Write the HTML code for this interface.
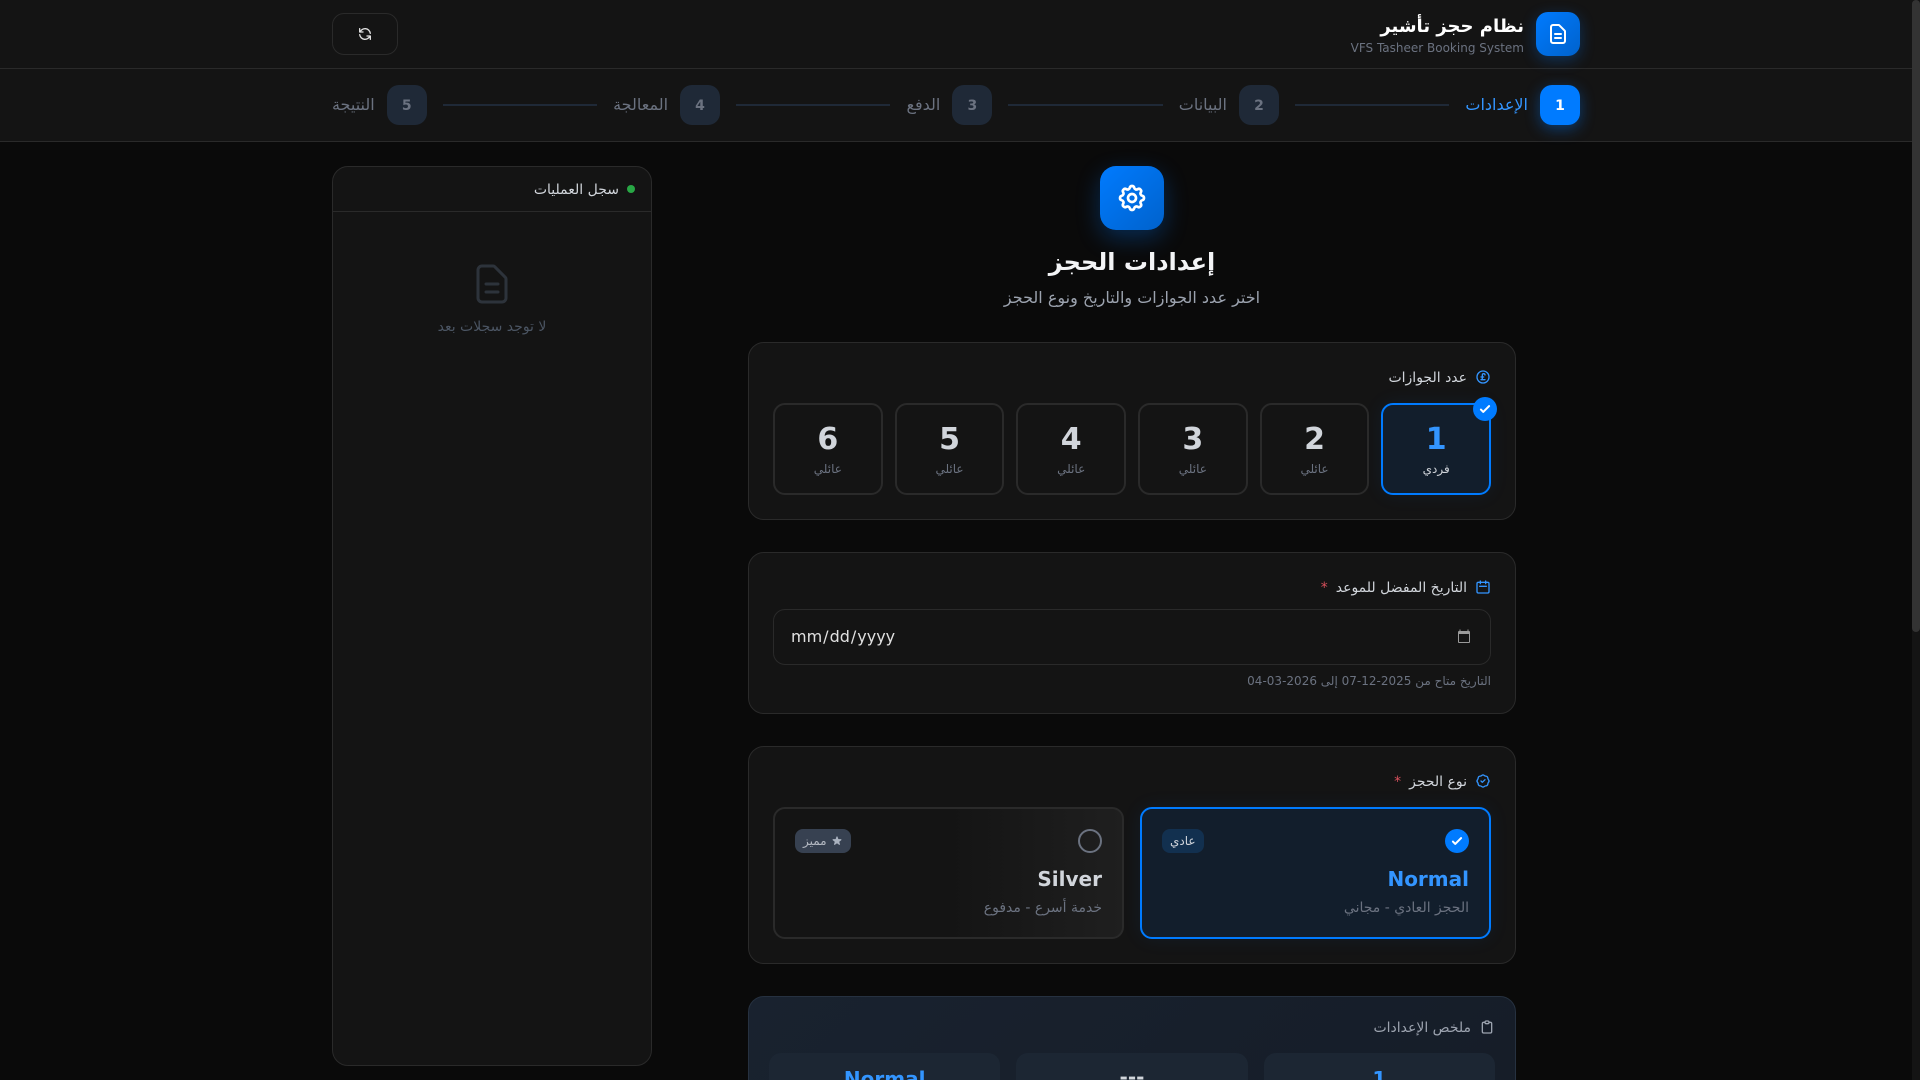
<!DOCTYPE html>
<html lang="ar" dir="rtl">
<head>
<meta charset="utf-8">
<title>نظام حجز تأشير</title>
<style>
*{box-sizing:border-box;margin:0;padding:0}
html,body{width:1920px;height:1080px;overflow:hidden;background:#0a0a0a}
body{font-family:"DejaVu Sans","Liberation Sans","Noto Sans CJK SC",sans-serif;color:#e0e0e0;position:relative;font-size:14px;line-height:20px}
svg{display:block;flex:none}
.sb-track{position:absolute;left:1912px;top:0;width:8px;height:1080px;background:#141414}
.sb-thumb{position:absolute;left:1912px;top:0;width:8px;height:632px;background:#333;border-radius:4px}
.head{position:absolute;left:0;top:0;width:1912px;height:69px;background:#141414;border-bottom:1px solid #2a2a2a}
.stepbar{position:absolute;left:0;top:69px;width:1912px;height:73px;background:#141414;border-bottom:1px solid #2a2a2a}
.logo{position:absolute;left:1536px;top:12px;width:44px;height:44px;border-radius:12px;background:linear-gradient(135deg,#007bff,#0062cc);box-shadow:0 4px 15px rgba(0,123,255,.3);display:flex;align-items:center;justify-content:center}
.brand{position:absolute;right:396px;top:12px;text-align:right}
.brand h1{font-size:18px;line-height:28px;font-weight:700;color:#fff;position:relative;top:1px}
.brand p{font-size:12px;line-height:16px;color:#6b7280}
.refresh{position:absolute;left:332px;top:13px;width:66px;height:42px;border:1px solid #2a2a2a;border-radius:12px;display:flex;align-items:center;justify-content:center}
.steps{position:absolute;left:332px;top:16px;width:1248px;height:40px;display:flex;align-items:center}
.step{display:flex;align-items:center;gap:12px;flex:none}
.num{width:40px;height:40px;border-radius:12px;background:#1f2937;color:#6b7280;font-weight:700;font-size:14px;display:flex;align-items:center;justify-content:center;padding-top:1px}
.step span{color:#6b7280;font-size:16px;line-height:24px}
.step.on .num{background:#007bff;color:#fff;box-shadow:0 4px 15px rgba(0,123,255,.4)}
.step.on span{color:#3395ff}
.line{flex:1;height:2px;background:#1f2937;margin:0 16px}
.log{position:absolute;left:332px;top:166px;width:320px;height:900px;background:#141414;border:1px solid #2a2a2a;border-radius:16px}
.log-h{height:45px;border-bottom:1px solid #2a2a2a;display:flex;align-items:center;gap:8px;padding:0 16px;color:#d1d5db}
.log-h div+div{position:relative;top:1px}
.dot{width:8px;height:8px;border-radius:50%;background:#28a745}
.log-e{position:absolute;left:0;right:0;top:93px;display:flex;flex-direction:column;align-items:center}
.log-e p{font-size:14px;line-height:20px;color:#4b5563;margin-top:9px}
.gear{position:absolute;left:1100px;top:166px;width:64px;height:64px;border-radius:16px;background:linear-gradient(135deg,#007bff,#0062cc);box-shadow:0 8px 24px rgba(0,123,255,.3);display:flex;align-items:center;justify-content:center}
.ttl{position:absolute;left:748px;width:768px;text-align:center}
.t1{top:246px;font-size:24px;line-height:32px;font-weight:700;color:#f3f4f6}
.t2{top:286px;font-size:16px;line-height:24px;color:#9ca3af}
.card{position:absolute;left:748px;width:768px;background:#141414;border:1px solid #2a2a2a;border-radius:16px;padding:24px}
.lab{display:flex;align-items:center;gap:8px;height:20px;color:#d1d5db}
.lab span{position:relative;top:1px}
.req{color:#d9505c}
.count{display:grid;grid-template-columns:repeat(6,1fr);gap:12px;margin-top:16px}
.ci{position:relative;height:92px;border:2px solid #2a2a2a;border-radius:12px;padding:16px;text-align:center}
.ci b{display:block;font-size:30px;line-height:36px;color:#d1d5db;margin-bottom:4px;position:relative;top:1px}
.ci i{display:block;font-style:normal;font-size:12px;line-height:16px;color:#6b7280}
.ci.on{border-color:#007bff;background:#121e2c;box-shadow:0 0 20px rgba(0,123,255,.08)}
.ci.on b{color:#3395ff}
.ci.on i{color:#d1d5db}
.chk{position:absolute;top:-8px;right:-8px;width:24px;height:24px;border-radius:50%;background:#007bff;display:flex;align-items:center;justify-content:center}
.dateb{height:56px;margin-top:12px;border:1px solid #2a2a2a;border-radius:12px;position:relative}
.dtxt{position:absolute;left:16px;top:15px;direction:ltr;font-size:16px;line-height:24px;color:#e0e0e0;white-space:nowrap;unicode-bidi:isolate}
.dtxt span{padding:0 1px}
.hint{margin-top:8px;font-size:12px;line-height:16px;color:#6b7280}
.types{display:grid;grid-template-columns:1fr 1fr;gap:16px;margin-top:16px}
.ti{height:132px;border:2px solid #2a2a2a;border-radius:12px;padding:20px;background:linear-gradient(to right,#141414 50%,#1f1f1f)}
.ti.on{border-color:#007bff;background:#121e2c;box-shadow:0 0 20px rgba(0,123,255,.08)}
.row{display:flex;justify-content:space-between;align-items:center;height:24px;margin-bottom:12px}
.rad{width:24px;height:24px;border-radius:50%;border:2px solid #6b7280}
.rad.on{border:0;background:#007bff;display:flex;align-items:center;justify-content:center}
.bdg{height:24px;padding:0 8px;border-radius:8px;font-size:12px;display:flex;align-items:center;gap:4px;line-height:16px}
.bdg.n{background:#12304f;color:#d1d5db}
.bdg.s{background:#374151;color:#b5bac3}
.ti h3{font-size:20px;line-height:28px;font-weight:700;color:#d1d5db;margin-bottom:4px}
.ti.on h3{color:#3395ff}
.ti p{font-size:14px;line-height:20px;color:#6b7280;position:relative;top:1px}
.sum{top:996px;height:220px;padding:20px;border-color:#263140;background:linear-gradient(135deg,#19222f,#151c27)}
.sum .lab{color:#9ca3af}
.sgrid{display:grid;grid-template-columns:repeat(3,1fr);gap:16px;margin-top:16px}
.si{height:120px;background:#1c2633;border-radius:12px;padding:12px;text-align:center;font-size:20px;line-height:28px;font-weight:700;color:#d1d5db}
.si.b{color:#3395ff}
.si.d{padding-top:10px}
</style>
</head>
<body>
<div class="head"></div>
<div class="stepbar">
  <div class="steps">
    <div class="step on"><div class="num">1</div><span>الإعدادات</span></div><div class="line"></div>
    <div class="step"><div class="num">2</div><span>البيانات</span></div><div class="line"></div>
    <div class="step"><div class="num">3</div><span>الدفع</span></div><div class="line"></div>
    <div class="step"><div class="num">4</div><span>المعالجة</span></div><div class="line"></div>
    <div class="step"><div class="num">5</div><span>النتيجة</span></div>
  </div>
</div>
<div class="logo"><svg width="24" height="24" viewBox="0 0 24 24" fill="none" stroke="#fff" stroke-width="2" stroke-linecap="round" stroke-linejoin="round"><path d="M9 12h6m-6 4h6m2 5H7a2 2 0 01-2-2V5a2 2 0 012-2h5.586a1 1 0 01.707.293l5.414 5.414a1 1 0 01.293.707V19a2 2 0 01-2 2z"/></svg></div>
<div class="brand"><h1>نظام حجز تأشير</h1><p>VFS Tasheer Booking System</p></div>
<div class="refresh"><svg width="16" height="16" viewBox="0 0 24 24" fill="none" stroke="#e0e0e0" stroke-width="2" stroke-linecap="round" stroke-linejoin="round"><path d="M4 4v5h.582m15.356 2A8.001 8.001 0 004.582 9m0 0H9m11 11v-5h-.581m0 0a8.003 8.003 0 01-15.357-2m15.357 2H15"/></svg></div>

<div class="log">
  <div class="log-h"><div class="dot"></div><div>سجل العمليات</div></div>
  <div class="log-e">
    <svg width="48" height="48" viewBox="0 0 24 24" fill="none" stroke="#2d333b" stroke-width="1.5" stroke-linecap="round" stroke-linejoin="round"><path d="M9 12h6m-6 4h6m2 5H7a2 2 0 01-2-2V5a2 2 0 012-2h5.586a1 1 0 01.707.293l5.414 5.414a1 1 0 01.293.707V19a2 2 0 01-2 2z"/></svg>
    <p>لا توجد سجلات بعد</p>
  </div>
</div>

<div class="gear"><svg width="32" height="32" viewBox="0 0 24 24" fill="none" stroke="#fff" stroke-width="2" stroke-linecap="round" stroke-linejoin="round"><path d="M10.325 4.317c.426-1.756 2.924-1.756 3.35 0a1.724 1.724 0 002.573 1.066c1.543-.94 3.31.826 2.37 2.37a1.724 1.724 0 001.065 2.572c1.756.426 1.756 2.924 0 3.35a1.724 1.724 0 00-1.066 2.573c.94 1.543-.826 3.31-2.37 2.37a1.724 1.724 0 00-2.572 1.065c-.426 1.756-2.924 1.756-3.35 0a1.724 1.724 0 00-2.573-1.066c-1.543.94-3.31-.826-2.37-2.37a1.724 1.724 0 00-1.065-2.572c-1.756-.426-1.756-2.924 0-3.35a1.724 1.724 0 001.066-2.573c-.94-1.543.826-3.31 2.37-2.37.996.608 2.296.07 2.572-1.065z"/><path d="M15 12a3 3 0 11-6 0 3 3 0 016 0z"/></svg></div>
<div class="ttl t1">إعدادات الحجز</div>
<div class="ttl t2">اختر عدد الجوازات والتاريخ ونوع الحجز</div>

<div class="card" style="top:342px;height:178px">
  <div class="lab"><svg width="16" height="16" viewBox="0 0 24 24" fill="none" stroke="#3395ff" stroke-width="2" stroke-linecap="round" stroke-linejoin="round"><path d="M15 9a2 2 0 10-4 0v5a2 2 0 01-2 2h6m-6-4h4m8 0a9 9 0 11-18 0 9 9 0 0118 0z"/></svg><span>عدد الجوازات</span></div>
  <div class="count">
    <div class="ci on"><b>1</b><i>فردي</i><div class="chk"><svg width="14" height="14" viewBox="0 0 24 24" fill="none" stroke="#fff" stroke-width="3.5" stroke-linecap="round" stroke-linejoin="round"><path d="M5 13l4 4L19 7"/></svg></div></div>
    <div class="ci"><b>2</b><i>عائلي</i></div>
    <div class="ci"><b>3</b><i>عائلي</i></div>
    <div class="ci"><b>4</b><i>عائلي</i></div>
    <div class="ci"><b>5</b><i>عائلي</i></div>
    <div class="ci"><b>6</b><i>عائلي</i></div>
  </div>
</div>

<div class="card" style="top:552px;height:162px">
  <div class="lab"><svg width="16" height="16" viewBox="0 0 24 24" fill="none" stroke="#3395ff" stroke-width="2" stroke-linecap="round" stroke-linejoin="round"><path d="M8 7V3m8 4V3m-9 8h10M5 21h14a2 2 0 002-2V7a2 2 0 00-2-2H5a2 2 0 00-2 2v12a2 2 0 002 2z"/></svg><span>التاريخ المفضل للموعد</span><span class="req">*</span></div>
  <div class="dateb">
    <div class="dtxt"><span>mm</span>/<span>dd</span>/<span>yyyy</span></div>
    <svg style="position:absolute;left:682px;top:18px" width="16" height="16" viewBox="0 0 16 16" fill="none"><path d="M3.5 1.5h1v1.5h7V1.5h1V3h.5a1 1 0 011 1v10a1 1 0 01-1 1H3a1 1 0 01-1-1V4a1 1 0 011-1h.5z" fill="#9a9a9a"/><rect x="3" y="6" width="10" height="8" fill="#141414"/></svg>
  </div>
  <div class="hint">التاريخ متاح من 2025-12-07 إلى 2026-03-04</div>
</div>

<div class="card" style="top:746px;height:218px">
  <div class="lab"><svg width="16" height="16" viewBox="0 0 24 24" fill="none" stroke="#3395ff" stroke-width="2" stroke-linecap="round" stroke-linejoin="round"><path d="M9 12l2 2 4-4M7.835 4.697a3.42 3.42 0 001.946-.806 3.42 3.42 0 014.438 0 3.42 3.42 0 001.946.806 3.42 3.42 0 013.138 3.138 3.42 3.42 0 00.806 1.946 3.42 3.42 0 010 4.438 3.42 3.42 0 00-.806 1.946 3.42 3.42 0 01-3.138 3.138 3.42 3.42 0 00-1.946.806 3.42 3.42 0 01-4.438 0 3.42 3.42 0 00-1.946-.806 3.42 3.42 0 01-3.138-3.138 3.42 3.42 0 00-.806-1.946 3.42 3.42 0 010-4.438 3.42 3.42 0 00.806-1.946 3.42 3.42 0 013.138-3.138z"/></svg><span>نوع الحجز</span><span class="req">*</span></div>
  <div class="types">
    <div class="ti on">
      <div class="row"><div class="rad on"><svg width="14" height="14" viewBox="0 0 24 24" fill="none" stroke="#fff" stroke-width="3.5" stroke-linecap="round" stroke-linejoin="round"><path d="M5 13l4 4L19 7"/></svg></div><div class="bdg n">عادي</div></div>
      <h3>Normal</h3><p>الحجز العادي - مجاني</p>
    </div>
    <div class="ti">
      <div class="row"><div class="rad"></div><div class="bdg s"><svg width="12" height="12" viewBox="0 0 20 20" fill="#aab2bf"><path d="M9.049 2.927c.3-.921 1.603-.921 1.902 0l1.07 3.292a1 1 0 00.95.69h3.462c.969 0 1.371 1.24.588 1.81l-2.8 2.034a1 1 0 00-.364 1.118l1.07 3.292c.3.921-.755 1.688-1.54 1.118l-2.8-2.034a1 1 0 00-1.175 0l-2.8 2.034c-.784.57-1.838-.197-1.539-1.118l1.07-3.292a1 1 0 00-.364-1.118L2.98 8.72c-.783-.57-.38-1.81.588-1.81h3.461a1 1 0 00.951-.69l1.07-3.292z"/></svg><span>مميز</span></div></div>
      <h3>Silver</h3><p>خدمة أسرع - مدفوع</p>
    </div>
  </div>
</div>

<div class="card sum">
  <div class="lab"><svg width="16" height="16" viewBox="0 0 24 24" fill="none" stroke="#9ca3af" stroke-width="2" stroke-linecap="round" stroke-linejoin="round"><path d="M9 5H7a2 2 0 00-2 2v12a2 2 0 002 2h10a2 2 0 002-2V7a2 2 0 00-2-2h-2M9 5a2 2 0 002 2h2a2 2 0 002-2M9 5a2 2 0 012-2h2a2 2 0 012 2"/></svg><span>ملخص الإعدادات</span></div>
  <div class="sgrid">
    <div class="si b">1</div>
    <div class="si d">---</div>
    <div class="si b">Normal</div>
  </div>
</div>

<div class="sb-track"></div>
<div class="sb-thumb"></div>
</body>
</html>
